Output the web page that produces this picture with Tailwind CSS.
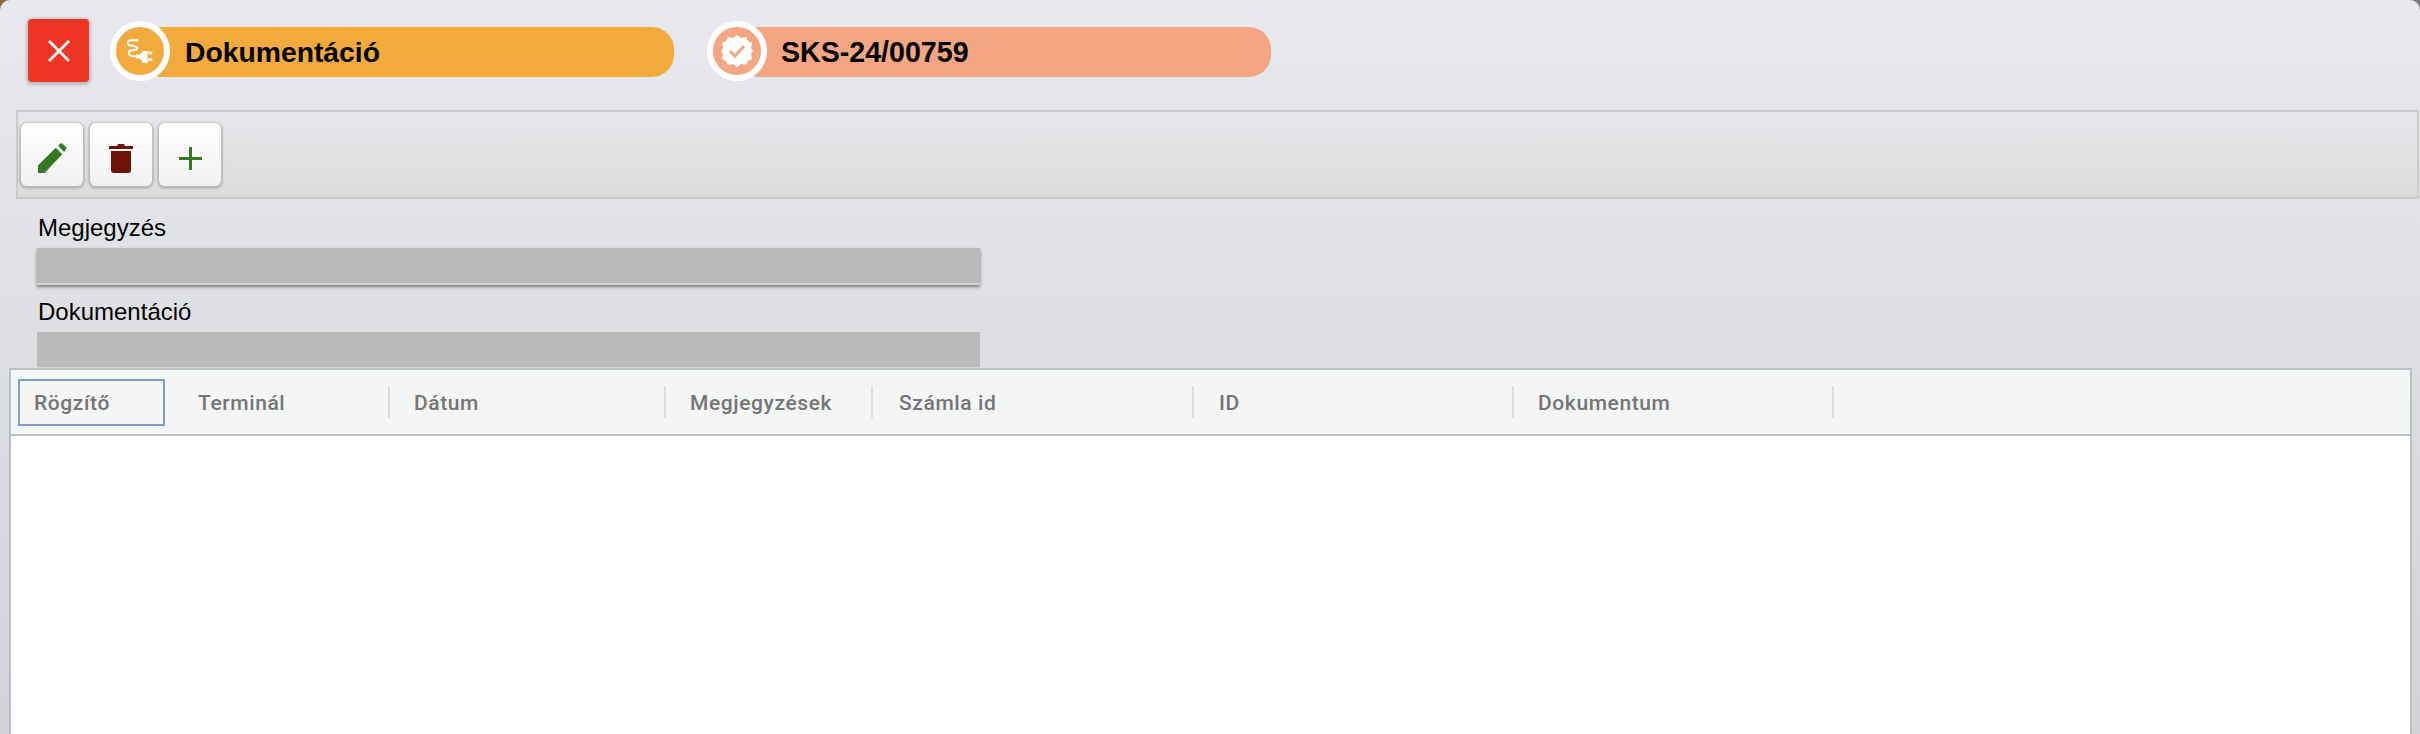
<!DOCTYPE html>
<html lang="hu">
  <head>
    <meta charset="UTF-8" />
    <title>Dokumentáció</title>
    <script src="https://cdn.jsdelivr.net/npm/@tailwindcss/browser@4"></script>
  </head>

  <body class="h-[734px] overflow-hidden bg-gradient-to-r from-[#8a6a3c] from-50% to-[#77797e] to-50% font-['Liberation_Sans',sans-serif]">
    <div class="h-[734px] overflow-hidden rounded-t-[10px] bg-gradient-to-b from-[#e8e9ed] to-[#d2d3d6]">
      <!-- Fejléc -->
      <div class="flex h-[110px] items-start pl-[28px] pt-[19px]">
        <button class="flex h-[63px] w-[61px] items-center justify-center rounded-[4px] bg-[#ee3524] shadow-[0_1px_3px_2px_rgba(0,0,0,0.18)]">
          <svg width="26" height="26" viewBox="0 0 26 26" fill="none" stroke="white" stroke-width="2.8">
            <path d="M3 3 L23 23 M23 3 L3 23" />
          </svg>
        </button>

        <div class="ml-[21px] flex items-center">
          <div class="z-10 mt-[2px] flex h-[60px] w-[60px] items-center justify-center rounded-full border-[6px] border-white bg-[#f3aa3c]">
            <svg width="27" height="24" viewBox="0 0 27 24" fill="white">
              <path d="M11.3 1.3 L3.5 1.3 C0.5 1.3 -0.3 5 2 6 L8.5 7.5 C11.5 8.5 10 11 8 11 L3.5 11.5 C0.5 12.5 1.5 16.5 4.7 17 L10 17.5" fill="none" stroke="white" stroke-width="1.9" />
              <path d="M9 15.5 L13 15.5 L16 12 L20.5 12 L20.5 24 L16 24 L13 19.5 L9 19.5 Z" />
              <rect x="21.3" y="12.7" width="4" height="2.6" />
              <rect x="21.3" y="19.3" width="4" height="2.7" />
            </svg>
          </div>
          <div class="-ml-[14px] mt-[4px] flex h-[50px] w-[518px] items-center rounded-r-[22px] rounded-l-[4px] bg-[#f3aa3c] pl-[29px] text-[28.3px] font-bold text-black">Dokumentáció</div>
        </div>

        <div class="ml-[33px] flex items-center">
          <div class="z-10 mt-[2px] flex h-[60px] w-[60px] items-center justify-center rounded-full border-[6px] border-white bg-[#f4a581]">
            <svg width="34" height="34" viewBox="0 0 34 34">
              <path fill="white" d="M17 1 L21 4 L26 3 L28 7 L32 9 L31 14 L33 17 L31 20 L32 25 L28 27 L26 31 L21 30 L17 33 L13 30 L8 31 L6 27 L2 25 L3 20 L1 17 L3 14 L2 9 L6 7 L8 3 L13 4 Z" />
              <path fill="none" stroke="#f4a581" stroke-width="3" d="M10 17 L15 22 L24 12" />
            </svg>
          </div>
          <div class="-ml-[14px] mt-[4px] flex h-[50px] w-[518px] items-center rounded-r-[22px] rounded-l-[4px] bg-[#f4a581] pl-[28px] text-[28.6px] font-bold text-black">SKS-24/00759</div>
        </div>
      </div>

      <!-- Eszköztár -->
      <div class="ml-[16px] mr-px flex h-[89px] items-start gap-[7px] border-2 border-[#cbcbcb] bg-gradient-to-b from-[#e6e7eb] to-[#dcdcdc] pl-[3px] pt-[11px]">
        <button class="flex h-[63px] w-[62px] items-center justify-center rounded-[6px] bg-gradient-to-b from-white to-[#f1f1f1] pt-[7px] shadow-[0_1px_2px_2px_rgba(0,0,0,0.17)]">
          <svg width="30" height="30" viewBox="0 0 32 32" fill="#34781f">
            <path d="M1 32 L1 24 L20 5 L27 12 L8 32 Z" />
            <path d="M22.5 3 L25 0.5 Q26 0 27 0.5 L31 4.5 Q31.5 5.5 31 6.5 L29 9.5 Z" />
          </svg>
        </button>
        <button class="flex h-[63px] w-[62px] items-center justify-center rounded-[6px] bg-gradient-to-b from-white to-[#f1f1f1] pt-[7px] shadow-[0_1px_2px_2px_rgba(0,0,0,0.17)]">
          <svg width="24" height="30" viewBox="0 0 24 30" fill="#6e1108">
            <path d="M0 3 L8 3 L9 1 L15 1 L16 3 L24 3 L24 6 L0 6 Z" />
            <path d="M2 8 L22 8 L22 27 Q22 30 19 30 L5 30 Q2 30 2 27 Z" />
          </svg>
        </button>
        <button class="flex h-[63px] w-[62px] items-center justify-center rounded-[6px] bg-gradient-to-b from-white to-[#f1f1f1] pt-[7px] shadow-[0_1px_2px_2px_rgba(0,0,0,0.17)]">
          <svg width="23" height="23" viewBox="0 0 23 23" fill="#34781f">
            <path d="M10 0 L13 0 L13 10 L23 10 L23 13 L13 13 L13 23 L10 23 L10 13 L0 13 L0 10 L10 10 Z" />
          </svg>
        </button>
      </div>

      <!-- Mezők -->
      <div class="ml-[37px] mt-[12px] h-[157px] w-[943px]">
        <label class="ml-px block h-[37px] text-[24px] leading-[34px] text-black">Megjegyzés</label>
        <div class="h-[37px] border-b-2 border-[#d4d4d4] bg-[#bababa] shadow-[0_2px_3px_rgba(0,0,0,0.45)]"></div>
        <label class="ml-px mt-[10px] block h-[37px] text-[24px] leading-[34px] text-black">Dokumentáció</label>
        <div class="h-[37px] border-b-2 border-[#d4d4d4] bg-[#bababa]"></div>
      </div>

      <!-- Táblázat -->
      <div class="ml-[9px] mr-[8px] h-[400px] border-2 border-[#b8c0c4] bg-white font-['Roboto',sans-serif] text-[21px] font-medium tracking-[0.6px] text-[#757575]">
        <div class="flex h-[66px] items-center border-b-2 border-[#b8c0c4] bg-[#f4f6f5]">
          <div class="ml-[7px] flex h-[47px] w-[147px] items-center border-2 border-[#7ba0cf] pl-[14px] pt-[3px]">Rögzítő</div>
          <div class="ml-[8px] flex h-[32px] w-[217px] items-center border-r-2 border-[#dcdfdf] pl-[25px] pt-[4px]">Terminál</div>
          <div class="flex h-[32px] w-[276px] items-center border-r-2 border-[#dcdfdf] pl-[24px] pt-[4px]">Dátum</div>
          <div class="flex h-[32px] w-[207px] items-center border-r-2 border-[#dcdfdf] pl-[24px] pt-[4px]">Megjegyzések</div>
          <div class="flex h-[32px] w-[321px] items-center border-r-2 border-[#dcdfdf] pl-[26px] pt-[4px]">Számla id</div>
          <div class="flex h-[32px] w-[320px] items-center border-r-2 border-[#dcdfdf] pl-[25px] pt-[4px]">ID</div>
          <div class="flex h-[32px] w-[320px] items-center border-r-2 border-[#dcdfdf] pl-[24px] pt-[4px]">Dokumentum</div>
        </div>
      </div>
    </div>
  </body>
</html>
